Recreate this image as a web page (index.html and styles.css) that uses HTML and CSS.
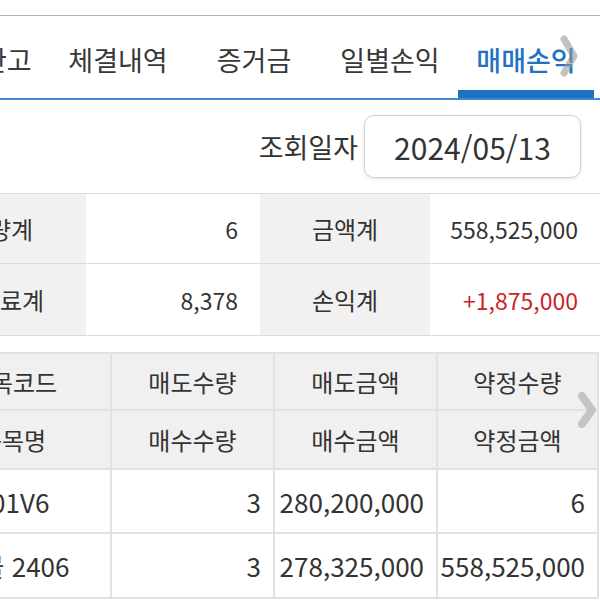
FILE: index.html
```html
<!DOCTYPE html>
<html lang="ko">
<head>
<meta charset="utf-8">
<title>매매손익</title>
<link rel="stylesheet" href="styles.css">
</head>
<body>
<div class="page">
  <nav class="tabs">
    <div class="tab">미결잔고</div>
    <div class="tab">체결내역</div>
    <div class="tab">증거금</div>
    <div class="tab">일별손익</div>
    <div class="tab active">매매손익</div>
  </nav>
  <div class="query">
    <span class="q-label">조회일자</span>
    <div class="date-box">2024/05/13</div>
  </div>
  <div class="summary">
    <div class="s-label">수량계</div>
    <div class="s-value">6</div>
    <div class="s-label">금액계</div>
    <div class="s-value">558,525,000</div>
    <div class="s-label">수수료계</div>
    <div class="s-value">8,378</div>
    <div class="s-label">손익계</div>
    <div class="s-value profit">+1,875,000</div>
  </div>
  <table class="detail">
    <colgroup>
      <col class="c1"><col class="c2"><col class="c3"><col class="c4">
    </colgroup>
    <thead>
      <tr class="h1"><th>종목코드</th><th>매도수량</th><th>매도금액</th><th>약정수량</th></tr>
      <tr class="h2"><th>종목명</th><th>매수수량</th><th>매수금액</th><th>약정금액</th></tr>
    </thead>
    <tbody>
      <tr class="d1"><td class="name">101V6</td><td>3</td><td>280,200,000</td><td>6</td></tr>
      <tr class="d2"><td class="name">선물 2406</td><td>3</td><td>278,325,000</td><td>558,525,000</td></tr>
    </tbody>
  </table>
</div>
<svg class="chev chev-tab" width="24" height="46" viewBox="0 0 24 46"><polyline points="6,5 16,22 6,39" fill="none" stroke="#9a9a9a" stroke-width="7" stroke-linecap="round" stroke-linejoin="round"/></svg>
<svg class="chev chev-table" width="26" height="42" viewBox="0 0 26 42"><polyline points="7,6 17,20 7,34" fill="none" stroke="#bdbdbd" stroke-width="8" stroke-linecap="round" stroke-linejoin="round"/></svg>
</body>
</html>
```
FILE: styles.css
```css
html, body {
  margin: 0;
  padding: 0;
}
body {
  width: 600px;
  height: 600px;
  overflow: hidden;
  position: relative;
  background: #ffffff;
  font-family: "Noto Sans CJK KR", "Noto Sans", sans-serif;
  color: #333333;
}
.page {
  margin-left: -86px;
  width: 686px;
  padding-top: 15px;
}
.tabs {
  display: flex;
  height: 85px;
  box-sizing: border-box;
  border-top: 1px solid #b4b4b4;
  border-bottom: 2px solid #4189cf;
}
.tab {
  width: 136px;
  flex: none;
  display: flex;
  align-items: center;
  justify-content: center;
  padding-top: 4px;
  box-sizing: border-box;
  font-size: 27px;
  white-space: nowrap;
  color: #383838;
}
.tab.active {
  color: #1f72c4;
  font-weight: 500;
  box-shadow: inset 0 -8px 0 #1f72c4;
}
.query {
  display: flex;
  justify-content: flex-end;
  align-items: center;
  gap: 6px;
  padding: 15px 19px 15px 0;
}
.q-label {
  font-size: 27px;
}
.date-box {
  width: 217px;
  height: 63px;
  box-sizing: border-box;
  border: 1px solid #d2d2d2;
  border-radius: 10px;
  box-shadow: 0 1px 3px rgba(0, 0, 0, 0.12);
  display: flex;
  align-items: center;
  justify-content: center;
  font-size: 30px;
}
.summary {
  display: grid;
  grid-template-columns: 172px 174px 170px 170px;
  grid-template-rows: 70px 72px;
  border-top: 1px solid #dcdcdc;
  font-size: 23px;
}
.s-label, .s-value {
  display: flex;
  align-items: center;
  box-sizing: border-box;
  border-bottom: 1px solid #dcdcdc;
}
.s-label {
  background: #f1f1f1;
  justify-content: center;
  font-size: 24px;
}
.s-value {
  background: #ffffff;
  justify-content: flex-end;
  padding-right: 22px;
}
.s-value.profit {
  color: #cc1f2a;
}
.detail {
  margin-top: 16px;
  width: 683px;
  border-collapse: collapse;
  table-layout: fixed;
}
.c1 { width: 196px; }
.c2 { width: 163px; }
.c3 { width: 163px; }
.c4 { width: 161px; }
.detail th, .detail td {
  border: 2px solid #e2e2e2;
  padding: 0 12px 0 0;
  white-space: nowrap;
}
.detail th {
  background: #f0f0f0;
  font-weight: 400;
  font-size: 24px;
  text-align: center;
  padding: 0;
}
.detail td {
  font-size: 26px;
  text-align: right;
}
.detail td.name {
  text-align: center;
  padding: 0;
}
.h1 { height: 57px; }
.h2 { height: 59px; }
.d1 { height: 64px; }
.d2 { height: 65px; }
.chev {
  position: absolute;
}
.chev-tab {
  left: 558px;
  top: 34px;
  opacity: 0.6;
}
.chev-table {
  left: 575px;
  top: 390px;
  opacity: 0.85;
}
```
